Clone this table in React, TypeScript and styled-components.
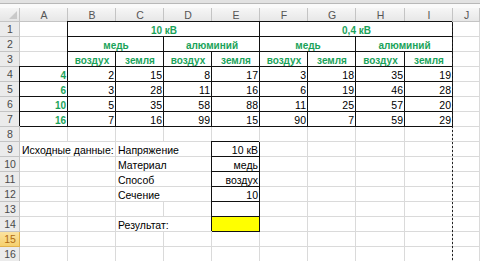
import styled, { createGlobalStyle } from "styled-components";

const GlobalStyle = createGlobalStyle`
  html, body {
    margin: 0;
    padding: 0;
    background: #fff;
  }
  body {
    font-family: "Liberation Sans", Arial, sans-serif;
  }
`;

const letters = ["A", "B", "C", "D", "E", "F", "G", "H", "I", "J"];
const colWidths = [48, 48, 48, 48, 48, 48, 48, 49, 48];
const gridLine = "#dadada";
const headLine = "#c4c4c4";
const ink = "#111";
const green = "#1aa35a";

type CellSpec = {
  text?: string;
  span?: number;
  align?: "left" | "center" | "right";
  head?: boolean;
  boxed?: boolean;
  fill?: string;
};

const Window = styled.div`
  width: 480px;
  height: 261px;
  overflow: hidden;
  background: #fff;
  display: flex;
  flex-direction: column;
`;

const FormulaEdge = styled.div`
  flex: none;
  height: 8px;
  background: linear-gradient(#e2e2e2 0 3px, #b8b8b8 3px 4px, #fafafa 4px);
`;

const Sheet = styled.div`
  position: relative;
  display: grid;
  grid-template-columns: 20px ${colWidths.map((w) => `${w}px`).join(" ")} 1fr;
  grid-template-rows: 14px;
  grid-auto-rows: 15px;
  font-size: 10.5px;
  color: #000;
`;

const Corner = styled.div`
  position: relative;
  background: linear-gradient(#f4f4f4, #e4e4e4);
  box-shadow: inset -1px -1px 0 ${headLine};

  &::after {
    content: "";
    position: absolute;
    right: 3px;
    bottom: 3px;
    border-style: solid;
    border-width: 0 0 8px 8px;
    border-color: transparent transparent #c9c9c9 transparent;
  }
`;

const ColHead = styled.div`
  background: linear-gradient(#f6f6f6, #e6e6e6);
  box-shadow: inset -1px -1px 0 ${headLine};
  color: #555;
  font-size: 10.5px;
  text-align: center;
  line-height: 14px;
`;

const RowHead = styled.div<{ $active?: boolean }>`
  background: ${(p) =>
    p.$active ? "linear-gradient(#fbe3a0, #f5cf6a)" : "#ebebeb"};
  box-shadow: inset -1px -1px 0 ${(p) => (p.$active ? "#e2b24a" : headLine)};
  color: ${(p) => (p.$active ? "#b06b10" : "#4a4a4a")};
  text-align: center;
  line-height: 15px;
`;

const Cell = styled.div<{
  $span: number;
  $align: string;
  $head?: boolean;
  $boxed?: boolean;
  $fill?: string;
}>`
  grid-column: span ${(p) => p.$span};
  padding: 1px 2px 0;
  line-height: 15px;
  white-space: nowrap;
  overflow: ${(p) => (p.$boxed ? "hidden" : "visible")};
  text-align: ${(p) => p.$align};
  font-size: ${(p) => (p.$head ? "10px" : "10.5px")};
  font-weight: ${(p) => (p.$head ? 700 : 400)};
  color: ${(p) => (p.$head ? green : "#000")};
  background: ${(p) => p.$fill ?? "transparent"};
  box-shadow: ${(p) =>
    p.$boxed
      ? `inset -1px -1px 0 ${ink}, -1px -1px 0 ${ink}`
      : `inset -1px -1px 0 ${gridLine}`};
  position: ${(p) => (p.$boxed ? "relative" : "static")};
  z-index: ${(p) => (p.$boxed ? 1 : "auto")};
`;

const PageBreak = styled.div`
  position: absolute;
  top: 14px;
  bottom: 0;
  left: ${20 + colWidths.reduce((a, b) => a + b, 0) - 1}px;
  width: 1px;
  z-index: 2;
  background: repeating-linear-gradient(#222 0 2px, transparent 2px 4px);
`;

const empty = (): CellSpec => ({});
const blanks = (n: number) => Array.from({ length: n }, empty);
const title = (text: string, span: number): CellSpec => ({
  text,
  span,
  align: "center",
  head: true,
  boxed: true,
});
const num = (n: number): CellSpec => ({ text: String(n), align: "right", boxed: true });
const label = (text: string, span = 1): CellSpec => ({ text, span });
const input = (text = "", fill?: string): CellSpec => ({
  text,
  align: "right",
  boxed: true,
  fill,
});

const table = [
  [4, 2, 15, 8, 17, 3, 18, 35, 19],
  [6, 3, 28, 11, 16, 6, 19, 46, 28],
  [10, 5, 35, 58, 88, 11, 25, 57, 20],
  [16, 7, 16, 99, 15, 90, 7, 59, 29],
];

const rows: CellSpec[][] = [
  [empty(), title("10 кВ", 4), title("0,4 кВ", 4), empty()],
  [
    empty(),
    title("медь", 2),
    title("алюминий", 2),
    title("медь", 2),
    title("алюминий", 2),
    empty(),
  ],
  [
    empty(),
    ...Array.from({ length: 8 }, (_, i) => title(i % 2 ? "земля" : "воздух", 1)),
    empty(),
  ],
  ...table.map(([size, ...vals]) => [
    { text: String(size), align: "right", head: true, boxed: true } as CellSpec,
    ...vals.map(num),
    empty(),
  ]),
  blanks(10),
  [label("Исходные данные:", 2), label("Напряжение", 2), input("10 кВ"), ...blanks(5)],
  [...blanks(2), label("Материал", 2), input("медь"), ...blanks(5)],
  [...blanks(2), label("Способ", 2), input("воздух"), ...blanks(5)],
  [...blanks(2), label("Сечение", 2), input("10"), ...blanks(5)],
  [...blanks(4), input(), ...blanks(5)],
  [...blanks(2), label("Результат:", 2), input("", "#ffff00"), ...blanks(5)],
  blanks(10),
  blanks(10),
];

export default function App() {
  return (
    <Window>
      <GlobalStyle />
      <FormulaEdge />
      <Sheet>
        <Corner />
        {letters.map((l) => (
          <ColHead key={l}>{l}</ColHead>
        ))}
        {rows.map((cells, r) => [
          <RowHead key={`h${r}`} $active={r === 14}>
            {r + 1}
          </RowHead>,
          ...cells.map((c, i) => (
            <Cell
              key={`${r}-${i}`}
              $span={c.span ?? 1}
              $align={c.align ?? "left"}
              $head={c.head}
              $boxed={c.boxed}
              $fill={c.fill}
            >
              {c.text}
            </Cell>
          )),
        ])}
        <PageBreak />
      </Sheet>
    </Window>
  );
}
